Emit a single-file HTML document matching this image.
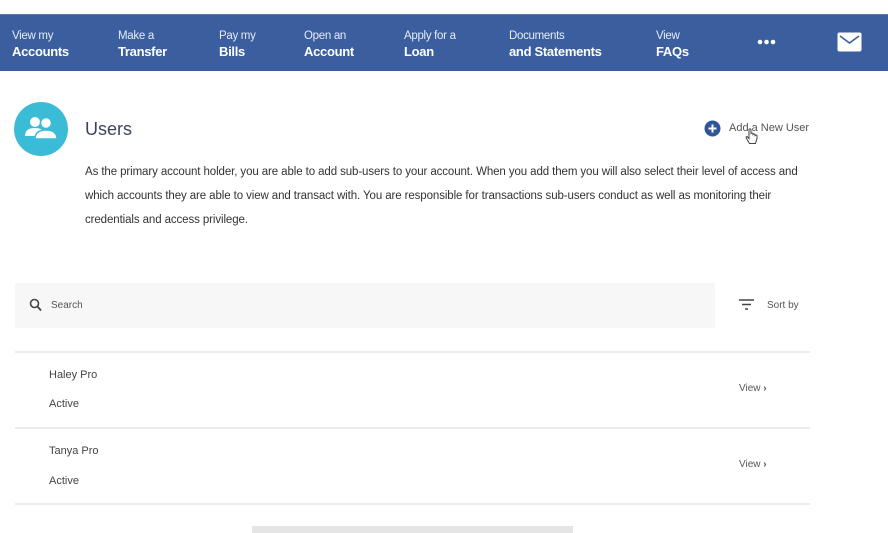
<!DOCTYPE html>
<html><head><meta charset="utf-8"><style>
*{margin:0;padding:0;box-sizing:border-box}
body{width:888px;height:533px;overflow:hidden;background:#fff;font-family:"Liberation Sans",sans-serif;position:relative;color:#333}
.nav{position:absolute;left:0;top:14px;width:888px;height:57px;background:#3b5e9f;border-top:1px solid #5a78b0}
.it{position:absolute;top:14px;color:#fff}
.it .a{font-size:11.5px;letter-spacing:-0.3px;color:#e6ecf5;line-height:14px}
.it .b{font-size:13px;font-weight:bold;letter-spacing:-0.3px;line-height:17px}
.abs{position:absolute;white-space:nowrap}
.line{position:absolute;left:15px;width:795px;height:2px;background:#ececec}
.p{font-size:11.5px;color:#333;letter-spacing:-0.1px}
</style></head><body>
<div class="nav">
<div class="it" style="left:12px"><div class="a">View my</div><div class="b">Accounts</div></div>
<div class="it" style="left:118px"><div class="a">Make a</div><div class="b">Transfer</div></div>
<div class="it" style="left:219px"><div class="a">Pay my</div><div class="b">Bills</div></div>
<div class="it" style="left:304px"><div class="a">Open an</div><div class="b">Account</div></div>
<div class="it" style="left:404px"><div class="a">Apply for a</div><div class="b">Loan</div></div>
<div class="it" style="left:509px"><div class="a">Documents</div><div class="b">and Statements</div></div>
<div class="it" style="left:656px"><div class="a">View</div><div class="b">FAQs</div></div>
<svg class="abs" style="left:756px;top:21px" width="22" height="12"><circle cx="4" cy="6" r="2.3" fill="#fff"/><circle cx="10.5" cy="6" r="2.3" fill="#fff"/><circle cx="17" cy="6" r="2.3" fill="#fff"/></svg>
<svg class="abs" style="left:837px;top:17px" width="25" height="20"><rect x="0.5" y="0.5" width="24" height="19" rx="2" fill="#fff"/><path d="M3 4 L12.5 11 L22 4" stroke="#3b5e9f" stroke-width="1.6" fill="none"/></svg>
</div>

<svg class="abs" style="left:14px;top:102px" width="54" height="54"><circle cx="27" cy="27" r="27" fill="#3bbcd6"/>
<circle cx="21" cy="20" r="5" fill="#fff"/><path d="M11 34 q0-8 10-8 q6 0 8 3 l0 5z" fill="#fff"/>
<circle cx="32" cy="21" r="5.5" fill="#fff" stroke="#3bbcd6" stroke-width="1.5"/><path d="M21 37 q0-9 11-9 q11 0 11 9z" fill="#fff" stroke="#3bbcd6" stroke-width="1.5"/></svg>
<div class="abs" style="left:85px;top:119px;font-size:18px;color:#3a4560">Users</div>

<svg class="abs" style="left:704px;top:120px" width="17" height="17"><circle cx="8.5" cy="8.5" r="8" fill="#2f5597"/><path d="M8.5 4.5v8M4.5 8.5h8" stroke="#fff" stroke-width="2"/></svg>
<div class="abs" style="left:729px;top:122px;font-size:11px;color:#555">Add a New User</div>
<svg class="abs" style="left:745px;top:128px" width="14" height="18"><path d="M4 1.5 v9 l-2-2 q-1.5 0-0.5 2 l3 5 h6 l1.5-5 v-3 q-1-1-2 0 v-1 q-1-1-2 0 v-1 q-1-1-2 0 v-4 q-1-1.5-2 0z" fill="#fff" stroke="#444" stroke-width="1"/></svg>

<div class="abs p" style="left:85px;top:166px">As the primary account holder, you are able to add sub-users to your account. When you add them you will also select their level of access and</div>
<div class="abs p" style="left:85px;top:190px">which accounts they are able to view and transact with. You are responsible for transactions sub-users conduct as well as monitoring their</div>
<div class="abs p" style="left:85px;top:214px">credentials and access privilege.</div>

<div class="abs" style="left:15px;top:283px;width:700px;height:45px;background:#f7f7f7"></div>
<svg class="abs" style="left:29px;top:298px" width="14" height="15"><circle cx="5.5" cy="5.5" r="4" fill="none" stroke="#444" stroke-width="1.6"/><path d="M8.5 8.5 L12 12.5" stroke="#444" stroke-width="1.8"/></svg>
<div class="abs" style="left:51px;top:300px;font-size:10px;color:#555">Search</div>
<svg class="abs" style="left:739px;top:299px" width="16" height="12"><path d="M0 1h15M3 5.5h9M6 10h3" stroke="#444" stroke-width="1.5"/></svg>
<div class="abs" style="left:767px;top:300px;font-size:10px;color:#555">Sort by</div>

<div class="line" style="top:351px"></div>
<div class="line" style="top:427px"></div>
<div class="line" style="top:503px"></div>

<div class="abs" style="left:49px;top:369px;font-size:11px;color:#444">Haley Pro</div>
<div class="abs" style="left:49px;top:398px;font-size:11px;color:#444">Active</div>
<div class="abs" style="left:739px;top:383px;font-size:10px;color:#555">View <span style="font-weight:bold">›</span></div>
<div class="abs" style="left:49px;top:445px;font-size:11px;color:#444">Tanya Pro</div>
<div class="abs" style="left:49px;top:475px;font-size:11px;color:#444">Active</div>
<div class="abs" style="left:739px;top:459px;font-size:10px;color:#555">View <span style="font-weight:bold">›</span></div>

<div class="abs" style="left:252px;top:526px;width:321px;height:7px;background:#e5e5e5"></div>
</body></html>
